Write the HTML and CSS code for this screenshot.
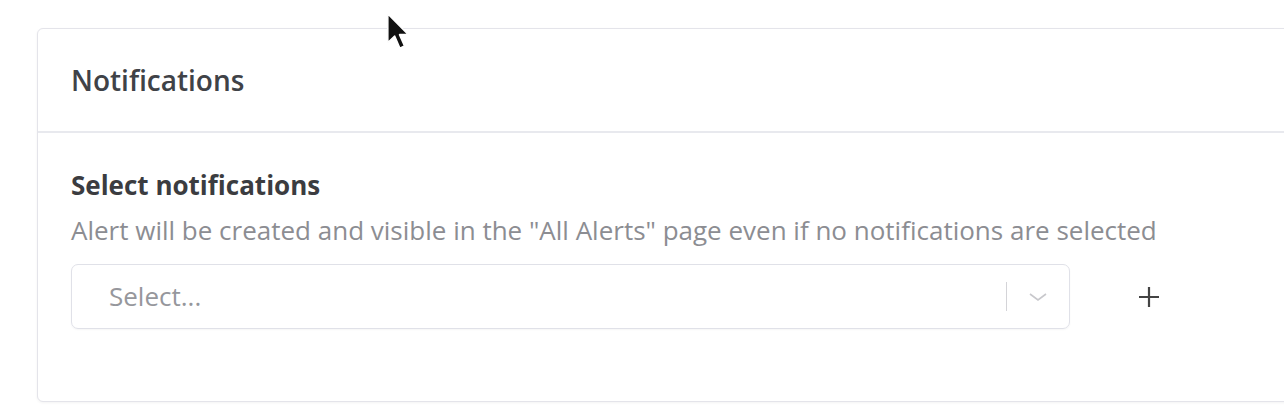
FILE: index.html
```html
<!DOCTYPE html>
<html>
<head>
<meta charset="utf-8">
<link rel="stylesheet" href="styles.css">
</head>
<body>
<div class="page">
  <section class="card">
    <header class="card-header">
      <h2 class="card-title">Notifications</h2>
    </header>
    <div class="card-body">
      <h3 class="field-label">Select notifications</h3>
      <p class="field-help">Alert will be created and visible in the "All Alerts" page even if no notifications are selected</p>
      <div class="field-row">
        <div class="select">
          <span class="select-placeholder">Select...</span>
          <span class="select-indicators">
            <span class="select-sep"></span>
            <svg class="select-chevron" width="20" height="10" viewBox="0 0 20 10"><path d="M2 2 L10 8 L18 2" fill="none" stroke="#c8c8cc" stroke-width="1.6"/></svg>
          </span>
        </div>
        <button class="add-btn" type="button">
          <svg width="22" height="22" viewBox="0 0 22 22"><path d="M11 1 V21 M1 11 H21" stroke="#444" stroke-width="2.2"/></svg>
        </button>
      </div>
    </div>
  </section>
  <svg class="cursor" width="24" height="38" viewBox="0 0 13 20.5"><path d="M1 1 L1 16.5 L4.7 13 L7.5 19.5 L10 18.4 L7.3 12.2 L12 12.2 Z" fill="#111" stroke="#fff" stroke-width="0.8" stroke-linejoin="round"/></svg>
</div>
</body>
</html>
```

FILE: styles.css
```css
html, body {
  margin: 0;
  padding: 0;
  background: #ffffff;
  overflow: hidden;
  font-family: "Open Sans", "Noto Sans", sans-serif;
}
.page {
  position: relative;
  width: 1284px;
  height: 418px;
  padding-top: 28px;
  padding-left: 37px;
  box-sizing: border-box;
}
.card {
  width: 1290px;
  height: 374px;
  border: 1.5px solid #e4e4ea;
  border-radius: 6px;
  box-shadow: 0 1px 3px rgba(0,0,0,0.05);
  background: #fff;
  box-sizing: border-box;
}
.card-header {
  height: 102px;
  display: flex;
  align-items: center;
  padding-left: 33px;
  border-bottom: 2px solid #e8e9ee;
}
.card-title {
  margin: 0;
  font-size: 28px;
  font-weight: 600;
  color: #404247;
  line-height: 36px;
}
.card-body {
  padding: 35px 0 0 33px;
}
.field-label {
  margin: 0;
  font-size: 26px;
  font-weight: 700;
  color: #3b3c40;
  line-height: 34px;
}
.field-help {
  margin: 11px 0 0;
  font-size: 26px;
  color: #8c8d92;
  line-height: 34px;
}
.field-row {
  display: flex;
  align-items: center;
  margin-top: 17px;
}
.select {
  width: 999px;
  height: 65px;
  border: 1.5px solid #e0e1e8;
  border-radius: 7px;
  display: flex;
  align-items: center;
  box-sizing: border-box;
  padding-left: 37px;
  box-shadow: 0 1px 2px rgba(0,0,0,0.04);
}
.select-placeholder {
  flex: 1;
  font-size: 26px;
  color: #96979c;
  line-height: 34px;
  margin-top: -2px;
}
.select-indicators {
  display: flex;
  align-items: center;
  gap: 21px;
  padding-right: 21px;
}
.select-sep {
  width: 1.5px;
  height: 29px;
  background: #d4d4d8;
}
.select-chevron {
  display: block;
}
.add-btn {
  margin-left: 68px;
  border: 0;
  background: none;
  padding: 0;
  width: 22px;
  height: 22px;
  display: flex;
}
.cursor {
  position: absolute;
  left: 386px;
  top: 12px;
}
```
